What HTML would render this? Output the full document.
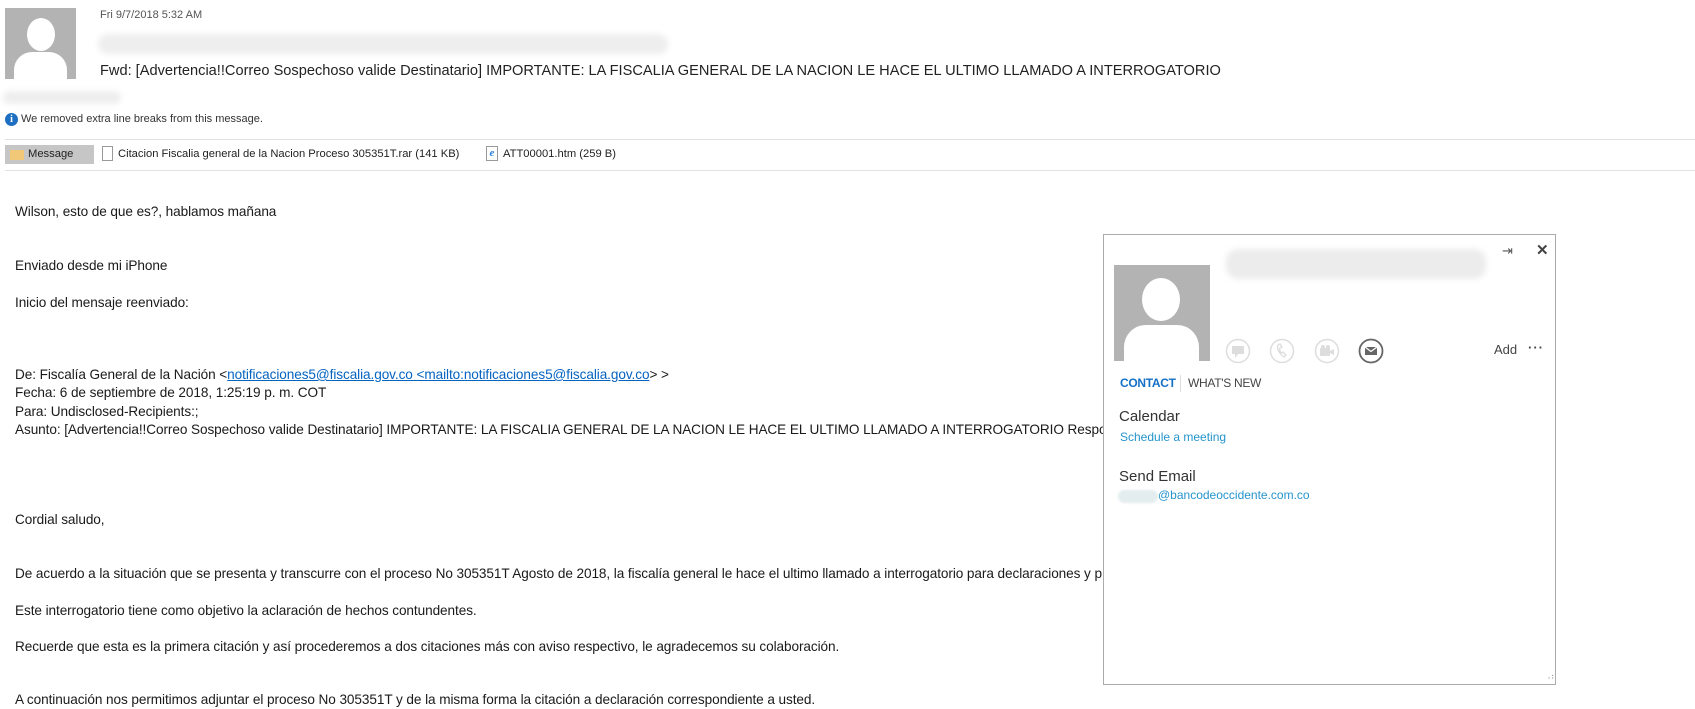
<!DOCTYPE html>
<html><head><meta charset="utf-8"><style>
*{margin:0;padding:0;box-sizing:border-box}
body{width:1695px;height:709px;background:#fff;position:relative;overflow:hidden;font-family:"Liberation Sans",sans-serif;color:#222}
.a{position:absolute;white-space:nowrap}
.b{font-size:13.6px;letter-spacing:-0.08px;color:#1a1a1a;left:15px}
.blur{position:absolute;background:#eee;border-radius:12px;filter:blur(3px)}
a{color:#0563c1;text-decoration:underline}
</style></head><body>
<div class="a" style="left:5px;top:8px;width:71px;height:71px;background:#b3b3b3;overflow:hidden">
<div style="position:absolute;left:22px;top:10px;width:28px;height:33px;border-radius:50%;background:#fff"></div>
<div style="position:absolute;left:9px;top:44px;width:53px;height:40px;border-radius:18px 18px 0 0;background:#fff"></div>
</div>
<div class="a" style="left:100px;top:9px;font-size:11px;color:#555">Fri 9/7/2018 5:32 AM</div>
<div class="blur" style="left:98px;top:34px;width:570px;height:20px"></div>
<div class="a" style="left:100px;top:63px;font-size:14.6px;color:#222">Fwd: [Advertencia!!Correo Sospechoso valide Destinatario] IMPORTANTE: LA FISCALIA GENERAL DE LA NACION LE HACE EL ULTIMO LLAMADO A INTERROGATORIO</div>
<div class="blur" style="left:3px;top:91px;width:118px;height:13px"></div>
<div class="a" style="left:5px;top:113px;width:13px;height:13px;border-radius:50%;background:#1e6fc1;color:#fff;font:bold 10px/13px 'Liberation Serif',serif;text-align:center">i</div>
<div class="a" style="left:21px;top:113px;font-size:11px;color:#333">We removed extra line breaks from this message.</div>
<div class="a" style="left:5px;top:139px;width:1690px;height:1px;background:#e2e2e2"></div>
<div class="a" style="left:5px;top:145px;width:89px;height:19px;background:#c6c6c6"></div>
<div class="a" style="left:10px;top:150px;width:14px;height:10px;background:#f0c878"></div>
<div class="a" style="left:28px;top:148px;font-size:11.2px;color:#222">Message</div>
<div class="a" style="left:102px;top:146px;width:11px;height:15px;border:1px solid #999;background:#fff"></div>
<div class="a" style="left:118px;top:148px;font-size:11.2px;color:#222">Citacion Fiscalia general de la Nacion Proceso 305351T.rar (141 KB)</div>
<div class="a" style="left:486px;top:146px;width:12px;height:15px;border:1px solid #999;background:#fff;color:#2a7fd8;font:bold italic 11px/13px 'Liberation Serif',serif;text-align:center">e</div>
<div class="a" style="left:503px;top:148px;font-size:11.2px;color:#222">ATT00001.htm (259 B)</div>
<div class="a" style="left:5px;top:170px;width:1690px;height:1px;background:#e2e2e2"></div>
<div class="a b" style="top:204px">Wilson, esto de que es?, hablamos mañana</div>
<div class="a b" style="top:258px">Enviado desde mi iPhone</div>
<div class="a b" style="top:295px">Inicio del mensaje reenviado:</div>
<div class="a b" style="top:367px">De: Fiscalía General de la Nación &lt;<a>notificaciones5@fiscalia.gov.co &lt;mailto:notificaciones5@fiscalia.gov.co</a>&gt; &gt;</div>
<div class="a b" style="top:385px">Fecha: 6 de septiembre de 2018, 1:25:19 p. m. COT</div>
<div class="a b" style="top:404px">Para: Undisclosed-Recipients:;</div>
<div class="a b" style="top:422px">Asunto: [Advertencia!!Correo Sospechoso valide Destinatario] IMPORTANTE: LA FISCALIA GENERAL DE LA NACION LE HACE EL ULTIMO LLAMADO A INTERROGATORIO Responder a</div>
<div class="a b" style="top:512px">Cordial saludo,</div>
<div class="a b" style="top:566px">De acuerdo a la situación que se presenta y transcurre con el proceso No 305351T  Agosto de 2018, la fiscalía general le hace el ultimo llamado a interrogatorio para declaraciones y p</div>
<div class="a b" style="top:603px">Este interrogatorio tiene como objetivo la aclaración de hechos contundentes.</div>
<div class="a b" style="top:639px">Recuerde que esta es la primera citación y así procederemos a dos citaciones más con aviso respectivo, le agradecemos su colaboración.</div>
<div class="a b" style="top:692px">A continuación nos permitimos adjuntar el proceso No 305351T  y de la misma forma la citación a declaración correspondiente a usted.</div>
<div class="a" style="left:1103px;top:234px;width:453px;height:451px;border:1px solid #ababab;background:#fff;overflow:hidden">
<div class="a" style="left:398px;top:8px;font-size:13px;color:#555">⇥</div>
<div class="a" style="left:432px;top:6px;font-size:15px;color:#444;font-weight:bold">✕</div>
<div class="a" style="left:10px;top:30px;width:96px;height:96px;background:#b3b3b3;overflow:hidden">
<div style="position:absolute;left:28px;top:13px;width:38px;height:43px;border-radius:50%;background:#fff"></div>
<div style="position:absolute;left:10px;top:60px;width:75px;height:50px;border-radius:22px 22px 0 0;background:#fff"></div>
</div>
<div class="blur" style="left:122px;top:14px;width:260px;height:30px;background:#ececec"></div>
<svg class="a" style="left:120px;top:102px" width="160" height="28" viewBox="0 0 160 28">
<g fill="none" stroke="#ddd" stroke-width="1.5"><circle cx="14" cy="14" r="11.5"/><circle cx="58" cy="14" r="11.5"/><circle cx="103" cy="14" r="11.5"/></g>
<rect x="8" y="9" width="12" height="8" fill="#ddd"/><path d="M11 17l0 4 3-4z" fill="#ddd"/>
<path d="M54 8q-2 6 6 12l2-2-3-3-2 1q-2-3-1-5l2-1-2-3z" fill="none" stroke="#ddd" stroke-width="1.3"/>
<rect x="96" y="11" width="10" height="8" fill="#ddd"/><path d="M106 14l4-2v6l-4-2z" fill="#ddd"/><circle cx="99" cy="10" r="2" fill="#ddd"/><circle cx="104" cy="10" r="2" fill="#ddd"/>
<circle cx="147" cy="14" r="11.5" fill="none" stroke="#666" stroke-width="1.8"/>
<rect x="141" y="10" width="12" height="8" fill="#666"/><path d="M141 10l6 4.5 6-4.5" fill="none" stroke="#fff" stroke-width="1.2"/>
</svg>
<div class="a" style="left:390px;top:107px;font-size:13px;color:#444">Add</div>
<div class="a" style="left:424px;top:108px;font-size:13px;color:#444;font-weight:bold;letter-spacing:1px;line-height:10px">···</div>
<div class="a" style="left:16px;top:141px;font-size:12px;color:#1570c6;font-weight:bold;letter-spacing:-0.3px">CONTACT</div>
<div class="a" style="left:76px;top:140px;width:1px;height:17px;background:#ddd"></div>
<div class="a" style="left:84px;top:141px;font-size:12px;color:#444;letter-spacing:-0.3px">WHAT'S NEW</div>
<div class="a" style="left:15px;top:173px;font-size:15px;color:#333">Calendar</div>
<div class="a" style="left:16px;top:195px;font-size:12px;color:#2594cc">Schedule a meeting</div>
<div class="a" style="left:15px;top:233px;font-size:15px;color:#333">Send Email</div>
<div class="blur" style="left:14px;top:255px;width:40px;height:13px;background:#e3ecef;filter:blur(1px)"></div>
<div class="a" style="left:54px;top:253px;font-size:12px;color:#2594cc">@bancodeoccidente.com.co</div>
<div class="a" style="left:441px;top:437px;font-size:8px;color:#999">⠠⠆</div>
</div>
</body></html>
